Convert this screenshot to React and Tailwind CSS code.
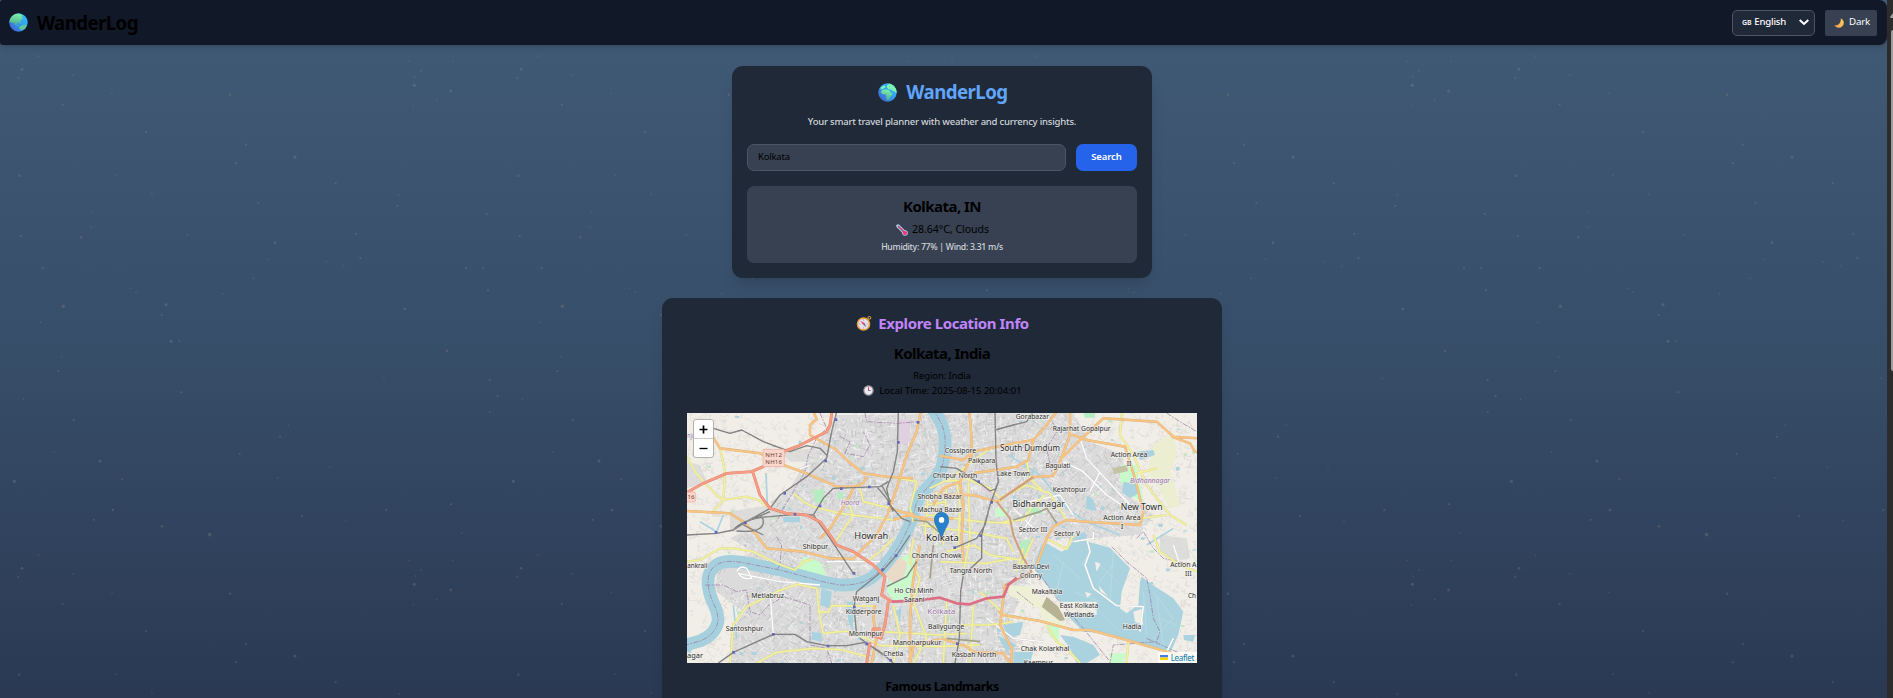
import React from 'react';

/* ---------- small deterministic random source ---------- */
function makeRandom(seed) {
  let s = seed;
  return () => {
    s = (s * 1664525 + 1013904223) % 4294967296;
    return s / 4294967296;
  };
}

/* ---------- starry backdrop ---------- */
const STARS = [
  [738, 44, 3], [885, 81, 5], [708, 100, 3], [58, 137, 4], [348, 136, 2], [456, 193, 2], [775, 219, 3],
  [1007, 160, 3], [1192, 228, 3], [1198, 195, 2], [1460, 252, 3], [273, 292, 2], [244, 322, 4], [62, 318, 3],
  [825, 338, 4], [803, 388, 2], [1069, 311, 3], [1081, 385, 3], [1031, 408, 2], [978, 396, 2], [1398, 415, 3],
  [1449, 415, 3], [1464, 481, 3], [1214, 537, 4], [190, 529, 6], [498, 524, 5], [513, 634, 5], [538, 632, 3],
  [485, 555, 3], [122, 577, 2], [185, 681, 2], [175, 724, 3], [544, 787, 3], [1341, 663, 4], [1152, 745, 2],
  [1469, 751, 3], [1469, 847, 3], [1493, 797, 3], [221, 871, 3], [70, 808, 2], [865, 886, 2], [840, 920, 3],
  [719, 971, 3], [300, 993, 5], [43, 1054, 5], [367, 1048, 3], [163, 967, 2], [834, 1044, 2], [990, 1012, 2],
  [339, 1140, 4], [281, 1169, 3], [486, 1189, 4], [629, 1214, 6], [906, 1158, 3], [1038, 1172, 2], [1159, 1140, 3],
  [1353, 1123, 3], [690, 1391, 4], [188, 1421, 3], [66, 1315, 4], [55, 1341, 3], [218, 1332, 2], [1243, 1363, 5],
  [1352, 1380, 5], [1245, 1338, 2], [1263, 1321, 2], [1227, 1291, 2], [1385, 1210, 2], [1359, 1291, 2],
  [1240, 1425, 2], [1310, 1408, 2], [438, 6, 3], [276, 247, 2], [562, 314, 2], [760, 445, 2], [391, 475, 2],
  [408, 487, 2], [668, 491, 2], [116, 1276, 2], [336, 1387, 2], [128, 415, 3],
];
const rs = makeRandom(11);
const DUST = Array.from({ length: 150 }, () => [rs() * 1497, rs() * 1497, 1.4, 0.03 + rs() * 0.06]);

function Stars() {
  return (
    <svg className="absolute inset-0 h-full w-full" aria-hidden="true">
      <defs>
        <pattern id="stars" x="0" y="130" width="499" height="499" patternUnits="userSpaceOnUse">
          <g transform="scale(0.33333)">
            {DUST.map(([x, y, r, o], i) => (
              <circle key={'d' + i} cx={x} cy={y} r={r} fill="#b9b4b0" opacity={o} />
            ))}
            {STARS.map(([x, y, r], i) => (
              <circle key={i} cx={x} cy={y} r={r * 0.8 + 0.6} fill={i % 3 ? '#a9b3ae' : '#b59d8e'} opacity={0.2} />
            ))}
          </g>
        </pattern>
      </defs>
      <rect width="100%" height="100%" fill="url(#stars)" />
    </svg>
  );
}

/* ---------- emoji-like drawings ---------- */
function GlobeDefs({ id }) {
  return (
    <defs>
      <linearGradient id={id + 'sea'} x1="1" y1="0" x2="0" y2="1">
        <stop offset="0" stopColor="#35c8fb" />
        <stop offset="0.5" stopColor="#2f9cf0" />
        <stop offset="1" stopColor="#4a53c4" />
      </linearGradient>
      <linearGradient id={id + 'land'} x1="0.6" y1="0" x2="0.4" y2="1">
        <stop offset="0" stopColor="#7df0a8" />
        <stop offset="1" stopColor="#4fae8f" />
      </linearGradient>
      <clipPath id={id + 'c'}>
        <circle cx="16" cy="16" r="15.5" />
      </clipPath>
    </defs>
  );
}
function GlobeAsia() {
  return (
    <svg viewBox="0 0 32 32" className="h-[19px] w-[19px]">
      <GlobeDefs id="ga" />
      <g clipPath="url(#gac)">
        <rect width="32" height="32" fill="url(#gasea)" />
        <path
          d="M0 12C4 4 10 0 17 1l4 2 2 1-2 3 3 1-2 3-3 1 1 3-3 2-2-2-2 4-3 1-1-4-3 1-3-2-3 2-2-2z"
          fill="url(#galand)"
        />
        <path d="M22 21l4-2 3 2-1 5-4 2-5 0-2-3 2-3zM17 16l3 1-1 2zM12 19l3 2-1 2z" fill="#5fc49a" />
      </g>
    </svg>
  );
}
function GlobeAfrica() {
  return (
    <svg viewBox="0 0 32 32" className="h-[19px] w-[19px]">
      <GlobeDefs id="gf" />
      <g clipPath="url(#gfc)">
        <rect width="32" height="32" fill="url(#gfsea)" />
        <path d="M5 7l4-3 4 1-1 3-4 2-4 1zM15 4l4-4 7 1 5 6 2 9-3 1-2-3-3 0-3-3-4 0-3-3z" fill="#7df2b0" />
        <path d="M6 13l3-2 6 0 5 2 2 4 3 0-2 4-3 3-1 4-3 1-2-3 0-5-2-2-4 0-3-3z" fill="url(#gfland)" />
      </g>
    </svg>
  );
}
function Moon() {
  return (
    <svg viewBox="0 0 20 20" className="h-[10px] w-[10px]">
      <defs>
        <linearGradient id="moon" x1="1" y1="0" x2="0" y2="1">
          <stop offset="0" stopColor="#ffd45e" />
          <stop offset="1" stopColor="#f59a4b" />
        </linearGradient>
      </defs>
      <path d="M13.5 0.5a10 10 0 1 1-13 13.5C7 16.500 15 10 13.500 0.500z" fill="url(#moon)" />
    </svg>
  );
}
function Thermometer() {
  return (
    <svg viewBox="0 0 24 24" className="h-[12px] w-[12px]">
      <path d="M4 4l13 13" stroke="#a9d3ee" strokeWidth="7" strokeLinecap="round" />
      <circle cx="18" cy="18" r="5.600" fill="#a9d3ee" />
      <path d="M5 5l12 12" stroke="#c8406f" strokeWidth="3.500" strokeLinecap="round" />
      <circle cx="18" cy="18" r="4.200" fill="#f5316f" />
    </svg>
  );
}
function Compass() {
  return (
    <svg viewBox="0 0 32 32" className="h-[15px] w-[16px]">
      <circle cx="27.500" cy="4" r="3" fill="none" stroke="#f5b33c" strokeWidth="2" />
      <circle cx="15" cy="17" r="13" fill="#e4dfee" stroke="#e8a03e" strokeWidth="3.200" />
      <path d="M8 10l9 5-3 3z" fill="#e8365e" />
      <path d="M21 24l-7-6 3-3z" fill="#6a6276" />
      <path d="M15 7v3M15 24v3M5 17h3M22 17h3" stroke="#9b93a8" strokeWidth="1.500" />
    </svg>
  );
}
function Clock() {
  return (
    <svg viewBox="0 0 20 20" className="h-[11px] w-[11px]">
      <circle cx="10" cy="10" r="8.500" fill="#ece8f0" stroke="#8f8a98" strokeWidth="2" />
      <path d="M10 4v6" stroke="#e23b55" strokeWidth="1.800" />
      <path d="M10 10h4" stroke="#6a6474" strokeWidth="1.600" />
    </svg>
  );
}

/* ---------- map ---------- */
const rm = makeRandom(77);
const inPoly = (x, y, p) => {
  let c = false;
  for (let i = 0, j = p.length - 1; i < p.length; j = i++) {
    const [xi, yi] = p[i];
    const [xj, yj] = p[j];
    if (yi > y !== yj > y && x < ((xj - xi) * (y - yi)) / (yj - yi) + xi) c = !c;
  }
  return c;
};
const URBAN = [
  [400, 130], [470, 30], [1180, 24], [1230, 110], [1330, 150], [1330, 260], [1420, 330], [1380, 390], [1230, 400],
  [1110, 400], [1080, 440], [1040, 530], [1010, 600], [1000, 640], [1010, 680], [1000, 774], [150, 774],
  [150, 700], [190, 620], [110, 560], [110, 490], [220, 440], [150, 400], [300, 330], [270, 290], [330, 250],
];
const WET = [
  [1100, 415], [1145, 440], [1165, 430], [1190, 390], [1215, 380], [1225, 410], [1290, 428], [1350, 490],
  [1325, 560], [1320, 610], [1340, 625], [1375, 600], [1380, 530], [1385, 515], [1410, 535], [1480, 580],
  [1510, 620], [1495, 690], [1470, 745], [1400, 725], [1280, 685], [1210, 680], [1150, 620], [1250, 630],
  [1250, 590], [1140, 590], [1100, 540], [1060, 490], [1080, 430],
];
const toPath = (p) => 'M' + p.map((q) => q.join(' ')).join('L') + 'Z';

const minor = { block: '', white: '', rural: '', ponds: [] };
for (let i = 0; i < 11000; i++) {
  const x = 21 + rm() * 1530;
  const y = 24 + rm() * 750;
  const a = (rm() < 0.5 ? 0.2 : 1.77) + (rm() - 0.5) * 0.5 + Math.sin(x / 160) * 0.5;
  const l = 5 + rm() * 14;
  const dx = Math.cos(a) * l;
  const dy = Math.sin(a) * l;
  const seg = `M${x.toFixed(0)} ${y.toFixed(0)}l${dx.toFixed(0)} ${dy.toFixed(0)}`;
  if (inPoly(x, y, WET)) continue;
  if (inPoly(x, y, URBAN)) {
    if (i % 5 < 3) minor.block += seg;
    else minor.white += seg;
  } else if (i % 3 === 0) {
    minor.rural += seg + `l${(dy * 0.8).toFixed(0)} ${(-dx * 0.6).toFixed(0)}`;
  }
  if (i % 75 === 0) minor.ponds.push([x, y, 4 + rm() * 9, 3 + rm() * 8]);
}

const RIVER =
  'M758 10L765 24Q792 60 795 100T785 190Q770 220 740 250Q708 285 705 310Q695 350 672 395Q655 430 635 455Q600 500 575 518Q540 542 480 540Q430 532 400 522L300 495L200 475Q140 462 112 478Q84 495 84 530Q85 560 98 590Q116 625 114 650Q105 690 60 708L10 722';
const BOUNDARY = [
  RIVER,
  'M420 24L440 70L410 100L385 150L375 200L340 260L310 310L290 350',
  'M555 24L560 50L650 55L720 50M480 95L510 110L495 145L550 155L570 120L550 80',
  'M75 540L130 540L170 560L200 555L210 620L240 630L260 605L310 575L390 600L390 720L440 730L455 774',
  'M290 395L305 420L300 480L290 495',
  'M1110 35L1130 80L1100 130L1115 200',
  'M1295 425L1340 470L1400 520L1410 570L1420 640L1440 680L1430 710L1300 720L1290 774M1400 700L1500 745M1370 400L1390 380L1420 430L1450 460L1520 475',
  'M1460 24L1500 50L1550 80M1060 480L1130 580L1210 670L1290 770M1010 560L1060 600',
];
const YELLOW = [
  'M21 155L45 200L70 230L110 270L130 285L200 275L235 285L270 310L330 330',
  'M120 130L135 200L130 285L95 325', 'M340 265L370 290L400 305L480 325L560 335L640 345',
  'M540 250L550 290L610 305L640 310', 'M630 215L710 230L690 310L700 350', 'M500 280L520 330L460 420',
  'M21 470L60 465L120 430L160 430L220 440L290 475L345 495L370 470L400 462',
  'M200 605L290 560L350 538L410 550L415 600L420 640L430 685L500 678L560 700L600 722L780 725L900 720',
  'M200 605L160 660L150 774', 'M230 774L290 742L400 730L490 735L560 755', 'M412 620L445 622L455 602L590 603',
  'M600 680L780 690L860 685', 'M800 440L880 420L930 450L1020 465', 'M900 560L970 625L990 640',
  'M780 470L920 475L1000 460', 'M840 660L920 660L970 655L1000 650', 'M1100 660L1130 710L1160 730L1200 774',
  'M1420 390L1440 440L1500 480L1551 500', 'M1345 710L1340 774', 'M1100 402L1160 432L1180 390',
  'M1325 24L1320 90L1360 150L1400 240L1470 330L1520 360', 'M855 220L930 250L970 290', 'M1040 170L1050 220L1090 260',
  'M960 280L1040 240L1110 265L1130 300L1160 345', 'M970 350L1030 345L1060 300L1095 270', 'M1380 340L1460 330',
  'M865 230L870 400L850 500', 'M830 230L840 300L835 420', 'M1370 205L1430 190', 'M740 330L900 350L990 355',
  'M720 360L860 380L980 400L1000 440', 'M640 400L600 440L560 470L520 440', 'M700 400L690 470L720 520L700 590L740 700L700 774',
  'M750 250L790 230L850 225M740 300L800 290M745 270L735 390M770 260L762 400M800 240L790 420', 'M640 600L660 690L640 774',
  'M800 590L790 774M880 600L870 774', 'M1030 430L1010 500M1060 400L1020 490', 'M930 130L870 175L800 230',
];
const ORANGE = [
  'M400 20L410 42L390 60L390 90L470 135L500 165L550 205L620 215L700 220', 'M722 20L710 80L680 150L650 250L622 330L590 390L540 440L520 462L450 460L370 440L260 430L230 390L190 350L150 325L21 318',
  'M95 90L120 130L240 145L310 180L380 205L470 245L520 245L550 235L560 215', 'M520 250L500 290L450 370L420 400',
  'M868 20L875 100L875 150L840 230L790 250L760 300', 'M780 152L850 165L880 140L1000 115L1060 105L1100 60L1130 20',
  'M880 205L1010 185L1045 165L1060 108', 'M1170 20L1170 90L1140 170L1120 212L1060 216L1010 250L950 290L880 270L790 270',
  'M1140 165L1200 105L1270 40L1430 50L1480 95L1551 100', 'M1475 95L1530 115L1545 140L1560 145',
  'M1165 85L1220 105L1335 125L1365 220L1390 320L1380 360L1220 350L1160 345L1120 365L1100 400L1070 480',
  'M840 230L850 300L845 400L850 470', 'M680 330L760 345L820 340', 'M630 310L700 330L740 350M640 345L700 325',
  'M785 700L860 725L880 740L970 745L990 774', 'M780 702L700 722L690 774', 'M955 620L970 630L1080 648L1180 675L1230 675L1340 705L1460 740L1551 765',
  'M975 540L960 660L995 730L995 774', 'M585 600L580 640L590 700L575 774', 'M720 420L700 520L690 640L690 774',
];
const BROWN = ['M950 290L990 340L1000 390L1030 460L1055 500L1000 530L975 540', 'M960 285L1060 216'];
const OLIVE = ['M1000 345L1080 320L1100 310L1130 355', 'M700 345L740 350L800 400', 'M760 420L750 520M800 700L900 710'];
const TRUNK = [
  'M456 20L450 60L440 80L380 110L350 125L310 140L250 185L215 200L140 205L70 235L21 262',
  'M218 200L240 270L270 310L320 325L380 330L420 350L450 390L470 420L520 440L580 480L615 515L605 570L635 590',
  'M625 590L615 660L603 700L575 690L580 672L603 672M570 712L560 774',
];
const PINK = ['M635 590L700 588L780 578L830 595L870 598L920 580L970 575L985 540L1010 518'];
const RAIL = [
  'M655 20L652 140L640 200L620 250L630 300L665 340L690 350', 'M470 20L455 80L440 160L380 215L300 270L270 310L200 350L160 375L110 385L21 390',
  'M100 70L150 85L185 75L250 110L330 140L380 122L420 130L440 150', 'M400 330L430 280L460 250L600 245L625 230',
  'M160 375Q190 340 270 335L345 328L400 330M170 378Q250 385 250 350T200 350M200 350L270 320M190 360L250 390',
  'M400 330L440 385L520 505', 'M530 690L522 605L530 560L580 520L610 495L650 450L690 390',
  'M115 774L160 742L280 688L345 688L380 710L440 722L500 722L555 712L600 740L640 774', 'M540 700L610 750',
  'M945 20L948 170L955 230L930 300L905 390L905 460L850 510L842 560L838 700L825 774',
  'M945 75L1000 60L1040 50L1060 20', 'M780 185L830 190L900 235L930 258L950 250', 'M930 300L915 360L890 400L825 428',
  'M590 245L620 280L640 320M605 240L632 290', 'M620 545L680 515L710 470',
];
const WHITE = [
  'M440 470L600 470', 'M1220 400L1230 440L1215 480L1240 550L1310 602L1390 605L1380 680', 'M170 500Q180 480 200 490L215 520Q190 525 175 505L300 530L420 540',
  'M1150 170L1210 200L1280 270L1340 310', 'M1060 330L1020 390M1000 310L1060 370', 'M1180 410L1240 400L1240 380', 'M1480 420L1500 480L1551 490M1480 700L1460 740L1551 760',
  'M1000 300L1140 270L1180 330M270 560L280 690M390 180L340 200M1200 100L1220 160L1350 300M1260 200L1230 260M920 640L1000 700L1090 710',
];
const draw = (list, color, width, extra = {}) => (
  <path d={list.join('')} fill="none" stroke={color} strokeWidth={width} strokeLinejoin="round" {...extra} />
);

/* x centre, baseline y, drawn width, size, text */
const LABELS = [
  [1057, 43, 100, 21, 'Gorabazar'], [1205, 78, 174, 21, 'Rajarhat Gopalpur'], [1050, 139, 180, 25, 'South Dumdum'],
  [841, 143, 94, 21, 'Cossipore'], [905, 175, 82, 21, 'Paikpara'], [1134, 190, 75, 21, 'Baguiati'],
  [1347, 156, 110, 21, 'Action Area'], [1347, 183, 14, 21, 'II'], [1000, 212, 100, 21, 'Lake Town'],
  [825, 219, 134, 21, 'Chitpur North'], [1168, 262, 100, 21, 'Keshtopur'], [779, 281, 133, 21, 'Shobha Bazar'],
  [779, 322, 133, 21, 'Machua Bazar'], [1076, 305, 157, 25, 'Bidhannagar'], [1385, 316, 125, 25, 'New Town'],
  [1326, 346, 112, 21, 'Action Area'], [1326, 373, 8, 21, 'I'], [1059, 382, 86, 21, 'Sector III'],
  [1161, 392, 78, 21, 'Sector V'], [574, 403, 102, 25, 'Howrah'], [406, 431, 76, 21, 'Shibpur'],
  [52, 488, 60, 21, 'ankrail'], [770, 459, 150, 21, 'Chandni Chowk'], [263, 580, 98, 21, 'Metiabruz'],
  [558, 589, 80, 21, 'Watganj'], [551, 628, 108, 21, 'Kidderpore'], [702, 565, 118, 21, 'Ho Chi Minh'],
  [703, 591, 62, 21, 'Sarani'], [193, 678, 112, 21, 'Santoshpur'], [557, 692, 102, 21, 'Mominpur'],
  [798, 671, 108, 21, 'Ballygunge'], [711, 720, 146, 21, 'Manoharpukur'], [640, 752, 60, 21, 'Chetla'],
  [45, 759, 48, 21, 'agar'], [882, 756, 134, 21, 'Kasbah North'], [873, 503, 128, 21, 'Tangra North'],
  [1053, 493, 110, 21, 'Basanti Devi'], [1053, 519, 66, 21, 'Colony'], [1101, 567, 92, 21, 'Makaltala'],
  [1197, 609, 116, 21, 'East Kolkata'], [1197, 635, 90, 21, 'Wetlands'], [1356, 671, 56, 21, 'Hadia'],
  [1095, 737, 146, 21, 'Chak Kolarkhal'], [1075, 780, 88, 21, 'Kaempur'],
  [1510, 486, 79, 21, 'Action A'], [1525, 512, 20, 21, 'III'], [1536, 580, 24, 21, 'Ch'],
];
const PURPLE_LABELS = [
  [510, 299, 56, 19, 'Haora'], [1410, 234, 120, 20, 'Bidhannagar'], [784, 628, 84, 21, 'Kolkata'], [33, 98, 22, 19, 'nja'],
];
const STATIONS = [
  [655, 112], [468, 44], [437, 168], [314, 265], [484, 251], [568, 246], [626, 296], [420, 303], [196, 354],
  [108, 382], [345, 328], [522, 505], [523, 606], [280, 688], [161, 742], [444, 723], [560, 717], [632, 766],
  [608, 494], [648, 452], [935, 292], [896, 230], [832, 716], [714, 52], [902, 392], [824, 428],
];

function MapView() {
  return (
    <div className="relative h-[250px] w-[510px] overflow-hidden bg-[#f2efe9]">
      <svg viewBox="21 24 1530 750" className="block h-full w-full" style={{ fontFamily: '"Noto Sans", sans-serif' }}>
        <rect x="0" y="0" width="1600" height="800" fill="#f1eee8" />
        <path d={toPath(URBAN)} fill="#dcdbdb" />
        <path d="M21 170L60 180L80 230L21 250ZM150 320L270 300L360 330L300 390L150 380ZM300 140L400 130L420 170L330 170Z" fill="#dddddc" />
        <path d="M1440 390L1520 400L1530 460L1480 470L1440 440Z" fill="#dddddc" />
        <path d={minor.block} fill="none" stroke="#c3c2c2" strokeWidth="2.200" />
        <path d={minor.white} fill="none" stroke="#f6f6f6" strokeWidth="2.200" />
        <path d={minor.rural} fill="none" stroke="#d9d5d1" strokeWidth="1.700" />
        <path d="M120 510L180 480L240 500L200 560L130 540Z M560 590L610 600L590 680L560 660Z M430 540L520 545L560 530L600 500L615 520L600 580L540 590L430 560Z" fill="#dcdbdb" />
        {minor.ponds.map(([x, y, w, h], i) => (
          <rect key={i} x={x} y={y} width={w} height={h} fill={i % 3 ? '#aad3df' : '#bfe8c0'} />
        ))}
        <path d="M370 455L420 470L440 510L400 518L345 500Z M640 470L700 440L705 470L690 580L640 585L620 560Z" fill="#c8facc" />
        <path d="M610 480Q640 445 680 470Q685 510 650 530Q620 540 610 480Z" fill="#eadbc8" />
        <path d="M400 260L430 250L435 290L405 295ZM470 265L490 262L490 280L470 282ZM1210 24L1245 24L1245 38L1215 38Z M1020 410L1050 400L1040 450L1020 445Z M1035 310L1070 305L1090 325L1050 330Z" fill="#b5ecc0" />
        <path d="M1320 180L1370 180L1392 300L1360 275L1320 230Z M1100 660L1138 662L1135 712L1110 695Z M1290 745L1340 745L1330 774L1290 774Z M945 310H980V335H945Z" fill="#c8facc" />
        <path d="M1420 120L1480 80L1492 150L1470 200L1500 300L1470 312L1430 240L1400 200Z" fill="#eceed2" />
        <path d="M985 540L1050 545L1085 575L1100 620L1170 668L1085 655L1080 610L985 570Z" fill="#eef0d5" />
        <path d="M1297 190L1340 180L1345 198L1302 208Z" fill="#c4c3a6" />
        <path d="M655 40L690 45L690 110L655 120ZM825 425L880 415L860 440L830 440ZM900 230L940 255L935 270L905 255Z" fill="#e0d0e0" />
        <g fill="#aad3df">
          <path d={toPath(WET)} />
          <path d="M1330 230L1370 238L1372 268L1350 280L1326 262ZM1220 270L1240 285L1250 318L1218 312ZM1370 140L1420 135L1425 150L1380 165ZM970 660L1030 650L1020 690L980 700Z" />
          <path d="M1140 690L1180 695L1240 720L1260 750L1220 774L1190 774L1170 730ZM950 690L1010 720L980 740ZM1000 740L1060 740L1050 774L1000 774Z" />
          <path d="M425 550L455 560L450 610L420 600ZM395 680L425 685L425 710L395 705ZM500 590L520 590L520 680L505 650ZM310 335L360 335L360 352L310 352ZM1510 690L1545 690L1540 710L1512 705ZM650 620L665 600L660 660Z" />
        </g>
        <path d={toPath([[1100, 575], [1135, 605], [1155, 645], [1140, 648], [1085, 605]])} fill="#b5b391" />
        <path d="M1230 440L1205 480M1120 450L1200 520M1300 480L1250 540M1180 560L1260 590M1420 560L1480 640L1420 700M1250 470L1320 540M1260 620L1320 680M1390 560L1400 690M1430 580L1450 720M1300 440L1290 590M1440 640L1490 660M1150 470L1130 560" stroke="#c3dfe8" strokeWidth="1.800" fill="none" />
        <path d="M1325 560L1340 540L1345 580ZM1245 470L1262 476L1250 500ZM1255 540L1285 575L1262 560ZM1360 620L1385 612L1390 660L1365 650ZM1215 560L1235 566L1222 578Z" fill="#f1eee8" />
        {draw(['M985 150L1080 210L1160 310L1220 350L1320 390', 'M258 205L262 300M60 350L110 380L130 330M1480 370L1400 420M160 600L170 700'], '#aad3df', 5)}
        {draw([RIVER], '#a6d0dd', 38)}
        {draw(BOUNDARY, '#9c7ea6', 3, { strokeDasharray: '16 4 5 4', opacity: 0.75 })}
        {draw(WHITE, '#cfccca', 5.2)}
        {draw(WHITE, '#ffffff', 4)}
        {draw(YELLOW, '#cfce9c', 6.6)}
        {draw(YELLOW, '#f3f19b', 5.2)}
        {draw(ORANGE, '#dcae74', 7.4)}
        {draw(ORANGE, '#f8c584', 5.6)}
        {draw(BROWN, '#cf9f7c', 6)}
        {draw(OLIVE, '#a3a286', 5)}
        {draw(RAIL, '#7d7d7d', 4)}
        {draw(RAIL, '#a5a5a5', 1.2, { strokeDasharray: '6 6' })}
        {draw(TRUNK, '#e27d68', 8.6)}
        {draw(TRUNK, '#f69d86', 6.4)}
        {draw(PINK, '#dc6f84', 8)}
        <g fill="#6268b8">
          {STATIONS.map(([x, y], i) => (
            <rect key={i} x={x - 4} y={y - 4} width="8" height="8" />
          ))}
        </g>
        <g>
          <rect x="249" y="133" width="64" height="52" rx="3" fill="#fbd6ca" stroke="#e8a898" strokeWidth="2" />
          <text x="281" y="155" fontSize="18" textAnchor="middle" textLength="50" fill="#6d3a35">NH12</text>
          <text x="281" y="177" fontSize="18" textAnchor="middle" textLength="50" fill="#6d3a35">NH16</text>
          <rect x="0" y="261" width="46" height="30" rx="3" fill="#fbd6ca" stroke="#e8a898" strokeWidth="2" />
          <text x="33" y="283" fontSize="18" textAnchor="middle" fill="#6d3a35">16</text>
        </g>
        {PURPLE_LABELS.map(([x, y, w, s, t], i) => (
          <text key={i} x={x} y={y} fontSize={s} textAnchor="middle" textLength={w} lengthAdjust="spacingAndGlyphs" fontStyle={i < 2 ? 'italic' : 'normal'} fill="#94719c" stroke="#f4f0f4" strokeWidth="3" paintOrder="stroke">
            {t}
          </text>
        ))}
        {LABELS.map(([x, y, w, s, t], i) => (
          <text key={i} x={x} y={y} fontSize={s} textAnchor="middle" textLength={w} lengthAdjust="spacingAndGlyphs" fill="#2d2d2d" stroke="#f3f1ee" strokeWidth="4" strokeOpacity="0.8" paintOrder="stroke">
            {t}
          </text>
        ))}
        <text x="787" y="409" fontSize="25" textAnchor="middle" textLength="98" lengthAdjust="spacingAndGlyphs" fill="#222" stroke="#f3f1ee" strokeWidth="4" paintOrder="stroke">
          Kolkata
        </text>
      </svg>
      <svg viewBox="0 0 25 41" preserveAspectRatio="none" className="absolute left-[247px] top-[99px] h-[26px] w-[15px]">
        <path d="M12.500 0.500C5.600 0.500 0.500 5.700 0.500 12.500c0 6 3 9.500 5.500 14L12.500 40.500 19 26.500c2.500-4.500 5.500-8 5.500-14C24.500 5.700 19.400 0.500 12.500 0.500z" fill="#2a81cb" stroke="#1f6cab" />
        <circle cx="12.500" cy="12.500" r="4.600" fill="#ffffff" />
      </svg>
      <div className="absolute left-[6px] top-[6px] flex w-[21px] flex-col rounded-[3px] border border-[#b3b1ad] bg-white">
        <div className="flex h-[19px] items-center justify-center border-b border-[#cccccc]">
          <svg viewBox="0 0 9 9" className="h-[9px] w-[9px]"><path d="M4.500 0.500v8M0.500 4.500h8" stroke="#000" strokeWidth="1.700" /></svg>
        </div>
        <div className="flex h-[18px] items-center justify-center">
          <svg viewBox="0 0 9 9" className="h-[9px] w-[9px]"><path d="M0.500 4.500h8" stroke="#000" strokeWidth="1.300" /></svg>
        </div>
      </div>
      <div className="absolute bottom-0 right-0 flex h-[11px] items-center gap-[3px] bg-white/80 pl-[2px] pr-[3px]">
        <svg viewBox="0 0 12 8" className="h-[5px] w-[8px]" preserveAspectRatio="none">
          <path d="M0 0h12v4H0z" fill="#4c7be1" />
          <path d="M0 4h12v4H0z" fill="#ffd500" />
        </svg>
        <span className="text-[8px] leading-[11px] tracking-[-0.300px] text-[#0078a8]">Leaflet</span>
      </div>
    </div>
  );
}

/* ---------- page ---------- */
function Header() {
  return (
    <header className="flex h-[45px] shrink-0 items-center justify-between rounded-[8px] rounded-l-[3px] bg-[#111827] pl-[9px] pr-[10px] shadow-md">
      <div className="flex items-center gap-[9px]">
        <GlobeAsia />
        <h1 className="text-[18.700px] font-bold leading-6 tracking-[-0.600px] text-black">WanderLog</h1>
      </div>
      <div className="flex items-center gap-[10px]">
        <div className="flex h-[26px] w-[83px] items-center rounded-[5px] border border-[#4b5563] bg-[#1f2937] pl-[9px] pr-[5px] text-[9.600px] font-medium tracking-[-0.200px] text-white">
          <span className="mr-[3px] mt-px text-[7px] font-semibold">GB</span>
          <span>English</span>
          <svg viewBox="0 0 10 7" className="ml-auto h-[7px] w-[10px]">
            <path d="M0.700 1l4.300 4 4.300-4" fill="none" stroke="#fff" strokeWidth="2" />
          </svg>
        </div>
        <button className="flex h-[26px] w-[52px] items-center justify-center gap-[5px] rounded-[2px] bg-[#374151] pl-[2px] text-[9.700px] tracking-[-0.200px] text-white">
          <Moon />
          Dark
        </button>
      </div>
    </header>
  );
}

function SearchCard() {
  return (
    <section className="flex h-[212px] w-[420px] flex-col rounded-[11px] bg-[#1f2937] px-[15px] pt-[14px] shadow-lg">
      <div className="flex h-6 items-center justify-center gap-[9px] pl-[2px]">
        <GlobeAfrica />
        <h2 className="text-[18.700px] font-bold leading-6 tracking-[-0.560px] text-[#60a5fa]">WanderLog</h2>
      </div>
      <p className="mt-[10px] text-center text-[9.500px] font-medium leading-[15px] tracking-[-0.210px] text-[#d1d5db]">
        Your smart travel planner with weather and currency insights.
      </p>
      <div className="mt-[15px] flex gap-[10px]">
        <div className="flex h-[27px] flex-1 items-center rounded-[7px] border border-[#4b5563] bg-[#374151] px-[10px] text-[9.500px] tracking-[-0.200px] text-black">
          Kolkata
        </div>
        <button className="h-[27px] w-[61px] rounded-[7px] bg-[#2563eb] text-[9.500px] font-semibold tracking-[-0.100px] text-white">Search</button>
      </div>
      <div className="mt-[15px] flex h-[77px] flex-col items-center rounded-[7px] bg-[#374151] pt-[10px]">
        <h3 className="text-[15px] font-bold leading-5 tracking-[-0.520px] text-black">Kolkata, IN</h3>
        <div className="mt-[6px] flex h-4 items-center gap-[4px] pl-px text-[10.500px] text-black">
          <Thermometer />
          <span>28.64°C, Clouds</span>
        </div>
        <p className="mt-[2px] text-[8.700px] font-medium leading-[14px] tracking-[-0.300px] text-[#d1d5db]">Humidity: 77% | Wind: 3.31 m/s</p>
      </div>
    </section>
  );
}

function ExploreCard() {
  return (
    <section className="mt-5 flex h-[430px] w-[560px] shrink-0 flex-col items-center rounded-[11px] bg-[#1f2937] pt-[13px] shadow-lg">
      <div className="flex h-6 items-center gap-[6px] pl-px">
        <Compass />
        <h2 className="text-[15px] font-bold leading-6 tracking-[-0.400px] text-[#c084fc]">Explore Location Info</h2>
      </div>
      <h3 className="mt-[8px] text-[15px] font-bold leading-5 tracking-[-0.560px] text-black">Kolkata, India</h3>
      <p className="mt-[6px] text-[9.500px] leading-[14px] tracking-[-0.100px] text-black">Region: India</p>
      <p className="flex items-center gap-[5px] pl-px text-[9.500px] leading-[15px] text-black">
        <Clock />
        <span>Local Time: 2025-08-15 20:04:01</span>
      </p>
      <div className="mt-[15px]">
        <MapView />
      </div>
      <h4 className="mt-[14px] text-[12.500px] font-bold leading-5 tracking-[-0.520px] text-black">Famous Landmarks</h4>
    </section>
  );
}

export default function App() {
  return (
    <div className="flex h-[698px] w-[1893px] overflow-hidden whitespace-nowrap font-['Noto_Sans',sans-serif]">
      <div className="relative h-full w-[1887px] bg-linear-to-b from-[#415a75] via-[#374e69] to-[#2b3953]">
        <Stars />
        <div className="relative flex h-full flex-col overflow-hidden">
          <Header />
          <main className="mt-[21px] flex flex-col items-center pr-[3px]">
            <SearchCard />
            <ExploreCard />
          </main>
        </div>
      </div>
      <div className="flex h-full w-[6px] flex-col items-end overflow-hidden bg-[#2c2c2c] pt-[13px]">
        <svg viewBox="0 0 3 5" className="h-[5px] w-[3px] shrink-0">
          <path d="M3 0L0 4L0.500 5H3z" fill="#9f9f9f" />
        </svg>
        <div className="mt-[12px] h-[341px] w-[2px] shrink-0 rounded-l-[2px] bg-[#9f9f9f]" />
      </div>
    </div>
  );
}
